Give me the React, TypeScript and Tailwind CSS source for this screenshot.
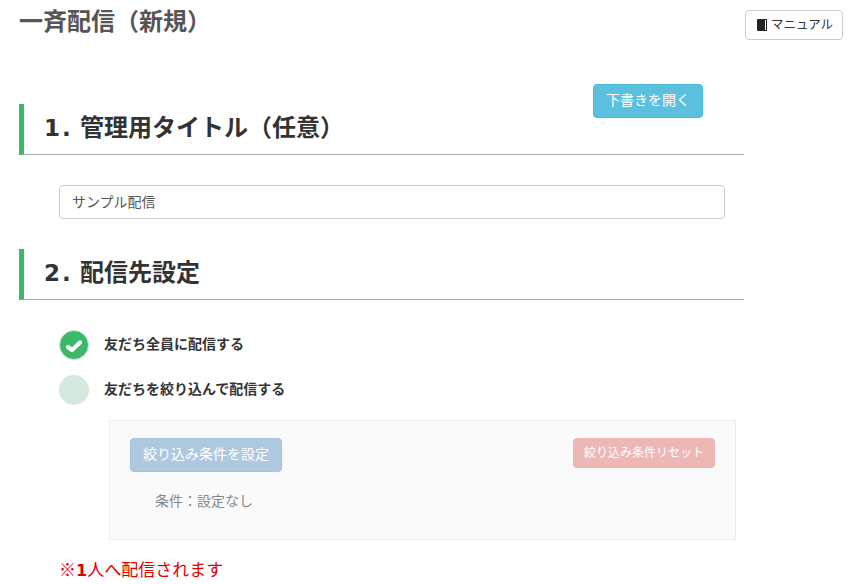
const FONT = "font-['Liberation_Sans','Noto_Sans_CJK_JP',sans-serif]"

function SectionHeading({ num, title }: { num: string; title: string }) {
	return (
		<h2 className="flex h-[51px] w-[725px] items-center border-b border-l-[5px] border-b-[#a9a9a9] border-l-[#3cb968] pb-[2px] pl-[20px] text-[24px] font-bold text-[#333]">
			<span className="mr-[9px] w-[27px] whitespace-nowrap font-['DejaVu_Sans',sans-serif] text-[23px] tracking-[2px]">{num}</span>
			{title}
		</h2>
	)
}

function RadioRow({ label, checked }: { label: string; checked?: boolean }) {
	return (
		<div className="flex h-[30px] items-center">
			<div className={`flex h-[30px] w-[30px] items-center justify-center rounded-full ${checked ? "border border-[#cfe8d8] bg-[#3cb968]" : "bg-[#d5e8dd]"}`}>
				{checked ? (
					<svg className="mt-[1px]" width="20" height="16" viewBox="0 0 20 16">
						<path d="M4 9 L8 12 L16 4.5" fill="none" stroke="#fff" strokeWidth="4.2" strokeLinecap="round" strokeLinejoin="round" />
					</svg>
				) : null}
			</div>
			<span className="ml-[15px] pb-[2px] text-[14px] font-bold text-[#333]">{label}</span>
		</div>
	)
}

export default function App() {
	return (
		<div className={`${FONT} h-[584px] w-[857px] overflow-hidden bg-white pl-[19px]`}>
			<div className="flex w-[824px] items-start justify-between">
				<h1 className="pt-[7px] text-[24px] font-bold leading-[30px] text-[#555]">一斉配信（新規）</h1>
				<button className="mt-[10px] flex h-[30px] w-[98px] items-center justify-center rounded-[4px] border border-[#ccc] bg-white pl-[2px] text-[12.5px] text-[#333]">
					<svg className="mr-[4px]" width="10" height="12" viewBox="0 0 10 12">
						<path d="M0 1 Q0 0 1 0 H10 V12 H1 Q0 12 0 11 Z" fill="#222" />
						<rect x="8" y="1" width="1" height="10" fill="#fff" />
					</svg>
					マニュアル
				</button>
			</div>

			<div className="mt-[44px] flex w-[684px] justify-end">
				<button className="h-[34px] w-[110px] rounded-[4px] border border-[#46b8da] bg-[#5bc0de] pb-[2px] text-[14px] text-white">下書きを開く</button>
			</div>

			<div className="-mt-[14px]">
				<SectionHeading num="1." title="管理用タイトル（任意）" />
			</div>

			<div className="mt-[30px] pl-[40px]">
				<input
					readOnly
					value="サンプル配信"
					className="h-[34px] w-[666px] rounded-[4px] border border-[#ccc] px-[12px] pb-[2px] text-[14px] text-[#555] outline-none"
				/>
			</div>

			<div className="mt-[30px]">
				<SectionHeading num="2." title="配信先設定" />
			</div>

			<div className="mt-[30px] flex flex-col gap-[15px] pl-[40px]">
				<RadioRow label="友だち全員に配信する" checked />
				<RadioRow label="友だちを絞り込んで配信する" />
			</div>

			<div className="ml-[90px] mt-[15px] h-[120px] w-[627px] border border-[#eee] bg-[#fafafa] px-[20px] pt-[17px]">
				<div className="flex items-start justify-between">
					<button className="h-[34px] w-[152px] rounded-[4px] border border-[#a5c3dc] bg-[#aec8df] pb-[2px] text-[14px] text-white">絞り込み条件を設定</button>
					<button className="h-[30px] w-[142px] rounded-[4px] border border-[#ecb5b4] bg-[#edb7b6] text-[12px] text-white">絞り込み条件リセット</button>
				</div>
				<p className="ml-[25px] mt-[19px] text-[14px] leading-[20px] text-[#888]">条件：設定なし</p>
			</div>

			<p className="ml-[40px] mt-[20px] text-[17px] leading-[22px] text-[#e00000]">
				※<span className="font-['DejaVu_Sans',sans-serif] text-[16px] font-bold">1</span>人へ配信されます
			</p>
		</div>
	)
}
